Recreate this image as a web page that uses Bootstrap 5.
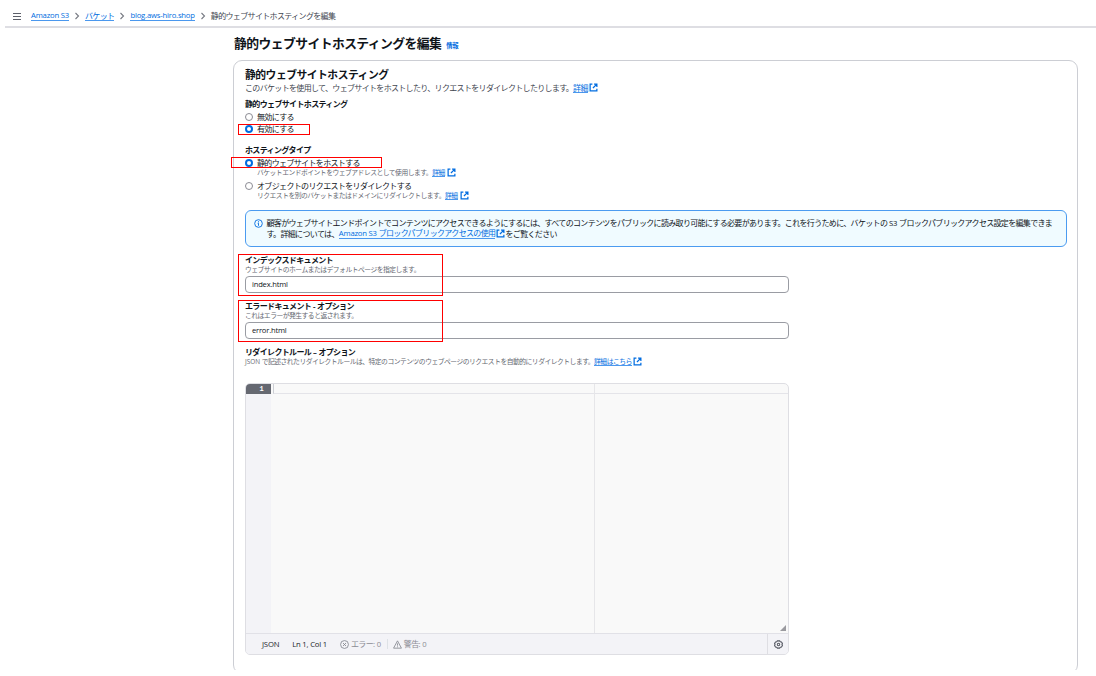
<!DOCTYPE html>
<html lang="ja">
<head>
<meta charset="utf-8">
<meta name="viewport" content="width=device-width, initial-scale=1">
<title>静的ウェブサイトホスティングを編集</title>
<link href="https://cdn.jsdelivr.net/npm/bootstrap@5.3.0/dist/css/bootstrap.min.css" rel="stylesheet">
<style>
  body { font-family: "Noto Sans CJK JP", sans-serif; font-size: 8px; line-height: 12px; letter-spacing: -.65px; color: #0f141a; background: #fff; overflow: hidden; white-space: nowrap; }
  a { color: #006ce0; text-decoration: none; border-bottom: 1px solid #4b98ee; display: inline-block; line-height: 9px; }
  svg { display: block; flex: none; }
  .page { height: 670px; overflow: hidden; }
  .en { font-family: "Open Sans", sans-serif; letter-spacing: -.2px; font-size: 7.7px; }
  .topbar { height: 28px; margin-left: 5px; padding: 10px 0 0 8px; border-bottom: 2px solid #dedee3; color: #424650; }
  .trail { margin-left: 10px; }
  .main-col { width: 845px; margin-left: 233px; }
  .page-title { height: 32px; padding-left: 1px; font-size: 12.8px; font-weight: 700; letter-spacing: -.56px; line-height: 30px; padding-bottom: 2px; margin: 0; }
  .page-title small { font-size: 6.3px; letter-spacing: -.2px; color: #006ce0; margin-left: 5px; line-height: 8px; margin-top: 5px; }
  .panel { height: 614px; border: 1px solid #ccced4; border-radius: 9px; padding: 6px 10px 0 11px; }
  .panel-title { font-size: 10.8px; letter-spacing: -.5px; font-weight: 700; line-height: 14px; height: 14px; margin: 0; }
  .desc { color: #424650; height: 13px; letter-spacing: -.67px; }
  .lbl { font-weight: 700; height: 12px; }
  .hint { font-size: 6.8px; letter-spacing: -.51px; color: #656871; height: 8px; line-height: 7px; padding-bottom: 1px; }
  .hint a { line-height: 7px; }
  .hint .en { font-size: 6.4px; letter-spacing: 0; }
  .opt { height: 12px; gap: 4px; }
  .sub { padding-left: 12px; }
  .ext { margin-left: 1px; }
  .dot { width: 8px; height: 8px; border: 1px solid #8c8c94; border-radius: 50%; flex: none; background: #fff; }
  .dot.on { border: 2.5px solid #006ce0; }
  .ring { position: absolute; border: 1px solid #f00; pointer-events: none; }
  .info { height: 37px; border: 1px solid #4b9bf0; border-bottom-width: 1.5px; border-radius: 6px; background: #f0fbff; margin-top: 10px; padding: 6px 8px 6px 7.5px; gap: 4px; line-height: 11px; letter-spacing: -.67px; }
  .info .row2 { height: 10px; margin-top: -1px; letter-spacing: -.65px; }
  .field { margin-top: 7px; }
  .txt { width: 544px; height: 17px; border: 1px solid #9a9ca3; border-radius: 4px; margin: 2px 0 0; padding: 0 6px; line-height: 14px; font-size: 7.6px; font-family: "Open Sans", sans-serif; letter-spacing: -.2px; }
  .editor { width: 544px; height: 272px; border: 1px solid #dedee3; border-radius: 5px; overflow: hidden; margin: 17px 0 0; background: #f9f9f9; }
  .gutter { width: 25px; background: #f3f3f7; }
  .gutter div { height: 10px; background: #656871; color: #fff; text-align: right; padding-right: 8px; font: 700 7px/10px "Liberation Mono", monospace; }
  .code { border-right: 1px solid #e6e6e9; width: 324px; }
  .active-line { height: 10px; border-bottom: 1px solid #e4e4e9; }
  .code .active-line { border-left: 1px solid #ccced4; margin-left: 2px; }
  .status { height: 21px; background: #f3f3f7; border-top: 1px solid #e1e1e7; color: #8c8c94; padding-left: 16px; }
  .cog { width: 21px; border-left: 1px solid #dedee3; }
  .grip { position: absolute; right: 2px; bottom: 2px; }
</style>
</head>
<body>
<svg width="0" height="0" class="position-absolute">
  <symbol id="ext" viewBox="0 0 16 16"><path d="M6 2H2v12h12v-4M9 2h5v5M14 2 7 9" fill="none" stroke="#006ce0" stroke-width="2.2"/></symbol>
  <symbol id="chev" viewBox="0 0 8 8"><path d="m2.500 1 3 3-3 3" fill="none" stroke="#777a83" stroke-width="1.1"/></symbol>
</svg>
<div class="page">
  <nav class="topbar d-flex align-items-start">
    <svg width="8" height="12" viewBox="0 0 8 12"><path d="M0 3.500h8M0 6.500h8M0 9.500h8" stroke="#5d606a" stroke-width="1.1"/></svg>
    <div class="trail d-flex align-items-center">
      <a href="#" class="en">Amazon S3</a>
      <svg width="8" height="8" class="mx-1"><use href="#chev"/></svg>
      <a href="#">バケット</a>
      <svg width="8" height="8" class="mx-1"><use href="#chev"/></svg>
      <a href="#" class="en">blog.aws-hiro.shop</a>
      <svg width="8" height="8" class="mx-1"><use href="#chev"/></svg>
      <span>静的ウェブサイトホスティングを編集</span>
    </div>
  </nav>
  <main class="main-col">
    <h1 class="page-title d-flex align-items-center">静的ウェブサイトホスティングを編集<small>情報</small></h1>
    <section class="panel">
      <h2 class="panel-title">静的ウェブサイトホスティング</h2>
      <div class="desc d-flex align-items-center">このバケットを使用して、ウェブサイトをホストしたり、リクエストをリダイレクトしたりします。<a href="#">詳細</a><svg width="9" height="9" class="ext"><use href="#ext"/></svg></div>

      <div class="lbl" style="margin-top:4px">静的ウェブサイトホスティング</div>
      <div class="opt d-flex align-items-center" style="height:9px;margin-top:2px"><i class="dot"></i>無効にする</div>
      <div class="opt d-flex align-items-center position-relative" style="margin-top:2px"><i class="dot on"></i>有効にする<b class="ring" style="left:-7px;top:1px;width:72px;height:11px"></b></div>

      <div class="lbl" style="margin-top:9px">ホスティングタイプ</div>
      <div class="opt d-flex align-items-center position-relative" style="margin-top:1px"><i class="dot on"></i>静的ウェブサイトをホストする<b class="ring" style="left:-14px;top:0;width:151px;height:11px"></b></div>
      <div class="hint sub d-flex align-items-center">バケットエンドポイントをウェブアドレスとして使用します。<a href="#">詳細</a><svg width="9" height="9" style="margin-left:2px"><use href="#ext"/></svg></div>
      <div class="opt d-flex align-items-center" style="margin-top:3px"><i class="dot"></i>オブジェクトのリクエストをリダイレクトする</div>
      <div class="hint sub d-flex align-items-center">リクエストを別のバケットまたはドメインにリダイレクトします。<a href="#">詳細</a><svg width="9" height="9" style="margin-left:2px"><use href="#ext"/></svg></div>

      <div class="info d-flex align-items-start">
        <svg width="9" height="9" viewBox="0 0 16 16" style="margin-top:2px"><circle cx="8" cy="8" r="6.8" fill="none" stroke="#006ce0" stroke-width="1.6"/><path d="M8 4v2M6.500 7.600H8V12" fill="none" stroke="#006ce0" stroke-width="1.700"/></svg>
        <div>
          <div>顧客がウェブサイトエンドポイントでコンテンツにアクセスできるようにするには、すべてのコンテンツをパブリックに読み取り可能にする必要があります。これを行うために、バケットの<span class="en"> S3 </span>ブロックパブリックアクセス設定を編集できま</div>
          <div class="row2 d-flex align-items-center">す。詳細については、<a href="#"><span class="en">Amazon S3 </span>ブロックパブリックアクセスの使用</a><svg width="9" height="9" class="ext"><use href="#ext"/></svg>をご覧ください</div>
        </div>
      </div>

      <div class="field position-relative">
        <div class="lbl">インデックスドキュメント</div>
        <div class="hint">ウェブサイトのホームまたはデフォルトページを指定します。</div>
        <div class="txt">index.html</div>
        <b class="ring" style="left:-7px;top:0;width:205px;height:42px"></b>
      </div>
      <div class="field position-relative">
        <div class="lbl">エラードキュメント<span class="en"> - </span>オプション</div>
        <div class="hint">これはエラーが発生すると返されます。</div>
        <div class="txt">error.html</div>
        <b class="ring" style="left:-7px;top:0;width:205px;height:42px"></b>
      </div>
      <div class="field lbl">リダイレクトルール<span class="en"> – </span>オプション</div>
      <div class="hint d-flex align-items-center"><span class="en">JSON&nbsp;</span>で記述されたリダイレクトルールは、特定のコンテンツのウェブページのリクエストを自動的にリダイレクトします。<a href="#">詳細はこちら</a><svg width="9" height="9" class="ext"><use href="#ext"/></svg></div>

      <div class="editor d-flex flex-column">
        <div class="d-flex flex-grow-1 position-relative">
          <div class="gutter"><div>1</div></div>
          <div class="code"><div class="active-line"></div></div>
          <div class="flex-grow-1"><div class="active-line"></div></div>
          <svg class="grip" width="6" height="6" viewBox="0 0 6 6"><path d="M6 0v6H0z" fill="#9a9a9f"/></svg>
        </div>
        <div class="status d-flex align-items-center">
          <span class="en text-dark">JSON</span>
          <span class="en text-dark" style="margin-left:13px">Ln 1, Col 1</span>
          <svg width="9" height="9" viewBox="0 0 16 16" style="margin:0 2px 0 13px"><circle cx="8" cy="8" r="7" fill="none" stroke="#85878f" stroke-width="1.5"/><path d="m5.500 5.500 5 5m0-5-5 5" stroke="#85878f" stroke-width="1.700"/></svg>
          <span>エラー<span class="en">: 0</span></span>
          <span class="border-start" style="height:10px;margin:0 5px 0 6px"></span>
          <svg width="9" height="9" viewBox="0 0 16 16" style="margin-right:2px"><path d="M8 1.500 15 14.500H1zM8 6v4M8 11.400v1.600" fill="none" stroke="#85878f" stroke-width="1.500"/></svg>
          <span>警告<span class="en">: 0</span></span>
          <div class="cog ms-auto h-100 d-flex align-items-center justify-content-center"><svg width="9" height="9" viewBox="0 0 16 16"><path d="M6 1.500h4l1.200 1.700 2.200.3 1.600 3L14.200 8l.8 1.500-1.600 3-2.200.3L10 14.500H6l-1.200-1.700-2.200-.3-1.600-3L1.800 8 1 6.500l1.600-3 2.200-.3z" fill="none" stroke="#565963" stroke-width="2"/><circle cx="8" cy="8" r="2.200" fill="none" stroke="#565963" stroke-width="1.800"/></svg></div>
        </div>
      </div>
    </section>
  </main>
</div>
<script src="https://cdn.jsdelivr.net/npm/bootstrap@5.3.0/dist/js/bootstrap.bundle.min.js"></script>
</body>
</html>
